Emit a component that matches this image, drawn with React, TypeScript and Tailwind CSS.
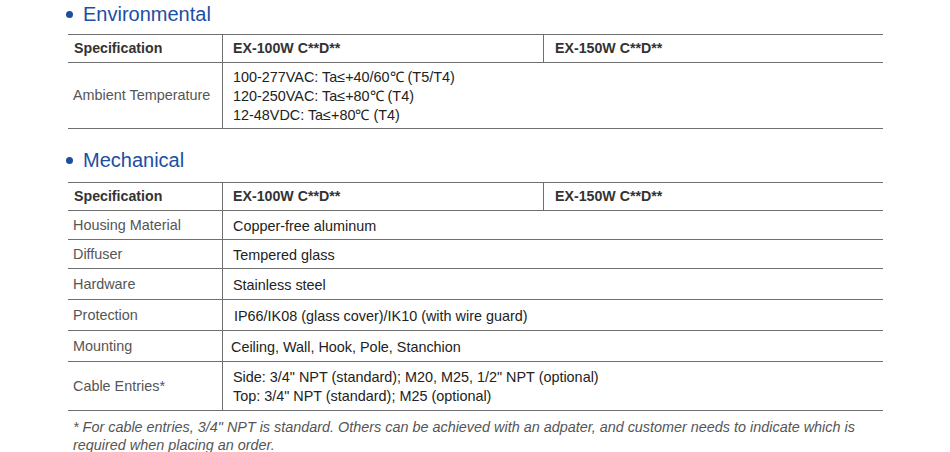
import React from "react";

const font = { fontFamily: '"Liberation Sans", Arial, sans-serif' };

function Title({ text }: { text: string }) {
  return (
    <div className="flex items-center h-[28px] text-[20px] text-[#1c4ea3] leading-[28px]">
      <span className="inline-block w-[7px] h-[7px] rounded-full bg-[#1c4ea3] ml-[-2px] mr-[10px]" />
      <span>{text}</span>
    </div>
  );
}

function Header() {
  return (
    <div className="flex h-[29px] border-t border-b border-[#6f6f6f] text-[14.2px] font-bold text-[#333]">
      <div className="w-[155px] flex items-center pt-[1px] pl-[6px] border-r border-[#6f6f6f]">Specification</div>
      <div className="w-[321px] flex items-center pt-[1px] pl-[10px] border-r border-[#6f6f6f]">EX-100W C**D**</div>
      <div className="flex-1 flex items-center pt-[1px] pl-[11px]">EX-150W C**D**</div>
    </div>
  );
}

function Row({ label, lines, h, pl = 10 }: { label: string; lines: string[]; h: string; pl?: number }) {
  return (
    <div className={`flex ${h} border-b border-[#6f6f6f] text-[14.4px]`}>
      <div className="w-[155px] flex items-center pt-[1px] pl-[5px] border-r border-[#6f6f6f] text-[#555]">{label}</div>
      <div className="flex-1 flex flex-col justify-center pt-[2px] text-[#222] leading-[19px]" style={{ paddingLeft: pl }}>
        {lines.map((l) => (
          <div key={l}>{l}</div>
        ))}
      </div>
    </div>
  );
}

export default function App() {
  return (
    <div className="w-[950px] h-[452px] bg-white pl-[68px] overflow-hidden" style={font}>
      <div className="w-[815px]">
        <Title text="Environmental" />
        <div className="h-[6px]" />
        <Header />
        <Row
          label="Ambient Temperature"
          h="h-[66px]"
          lines={["100-277VAC: Ta≤+40/60℃ (T5/T4)", "120-250VAC: Ta≤+80℃ (T4)", "12-48VDC: Ta≤+80℃ (T4)"]}
        />
        <div className="h-[17px]" />
        <Title text="Mechanical" />
        <div className="h-[8px]" />
        <Header />
        <Row label="Housing Material" h="h-[29px]" lines={["Copper-free aluminum"]} />
        <Row label="Diffuser" h="h-[29px]" lines={["Tempered glass"]} />
        <Row label="Hardware" h="h-[31px]" lines={["Stainless steel"]} />
        <Row label="Protection" h="h-[31px]" lines={["IP66/IK08 (glass cover)/IK10 (with wire guard)"]} pl={11} />
        <Row label="Mounting" h="h-[31px]" lines={["Ceiling, Wall, Hook, Pole, Stanchion"]} pl={8} />
        <Row
          label="Cable Entries*"
          h="h-[49px]"
          lines={['Side: 3/4" NPT (standard); M20, M25, 1/2" NPT (optional)', 'Top: 3/4" NPT (standard); M25 (optional)']}
        />
        <div className="pt-[7px] pl-[5px] text-[14.4px] italic text-[#555] leading-[18px]">
          * For cable entries, 3/4" NPT is standard. Others can be achieved with an adpater, and customer needs to indicate which is
          <br />
          required when placing an order.
        </div>
      </div>
    </div>
  );
}
